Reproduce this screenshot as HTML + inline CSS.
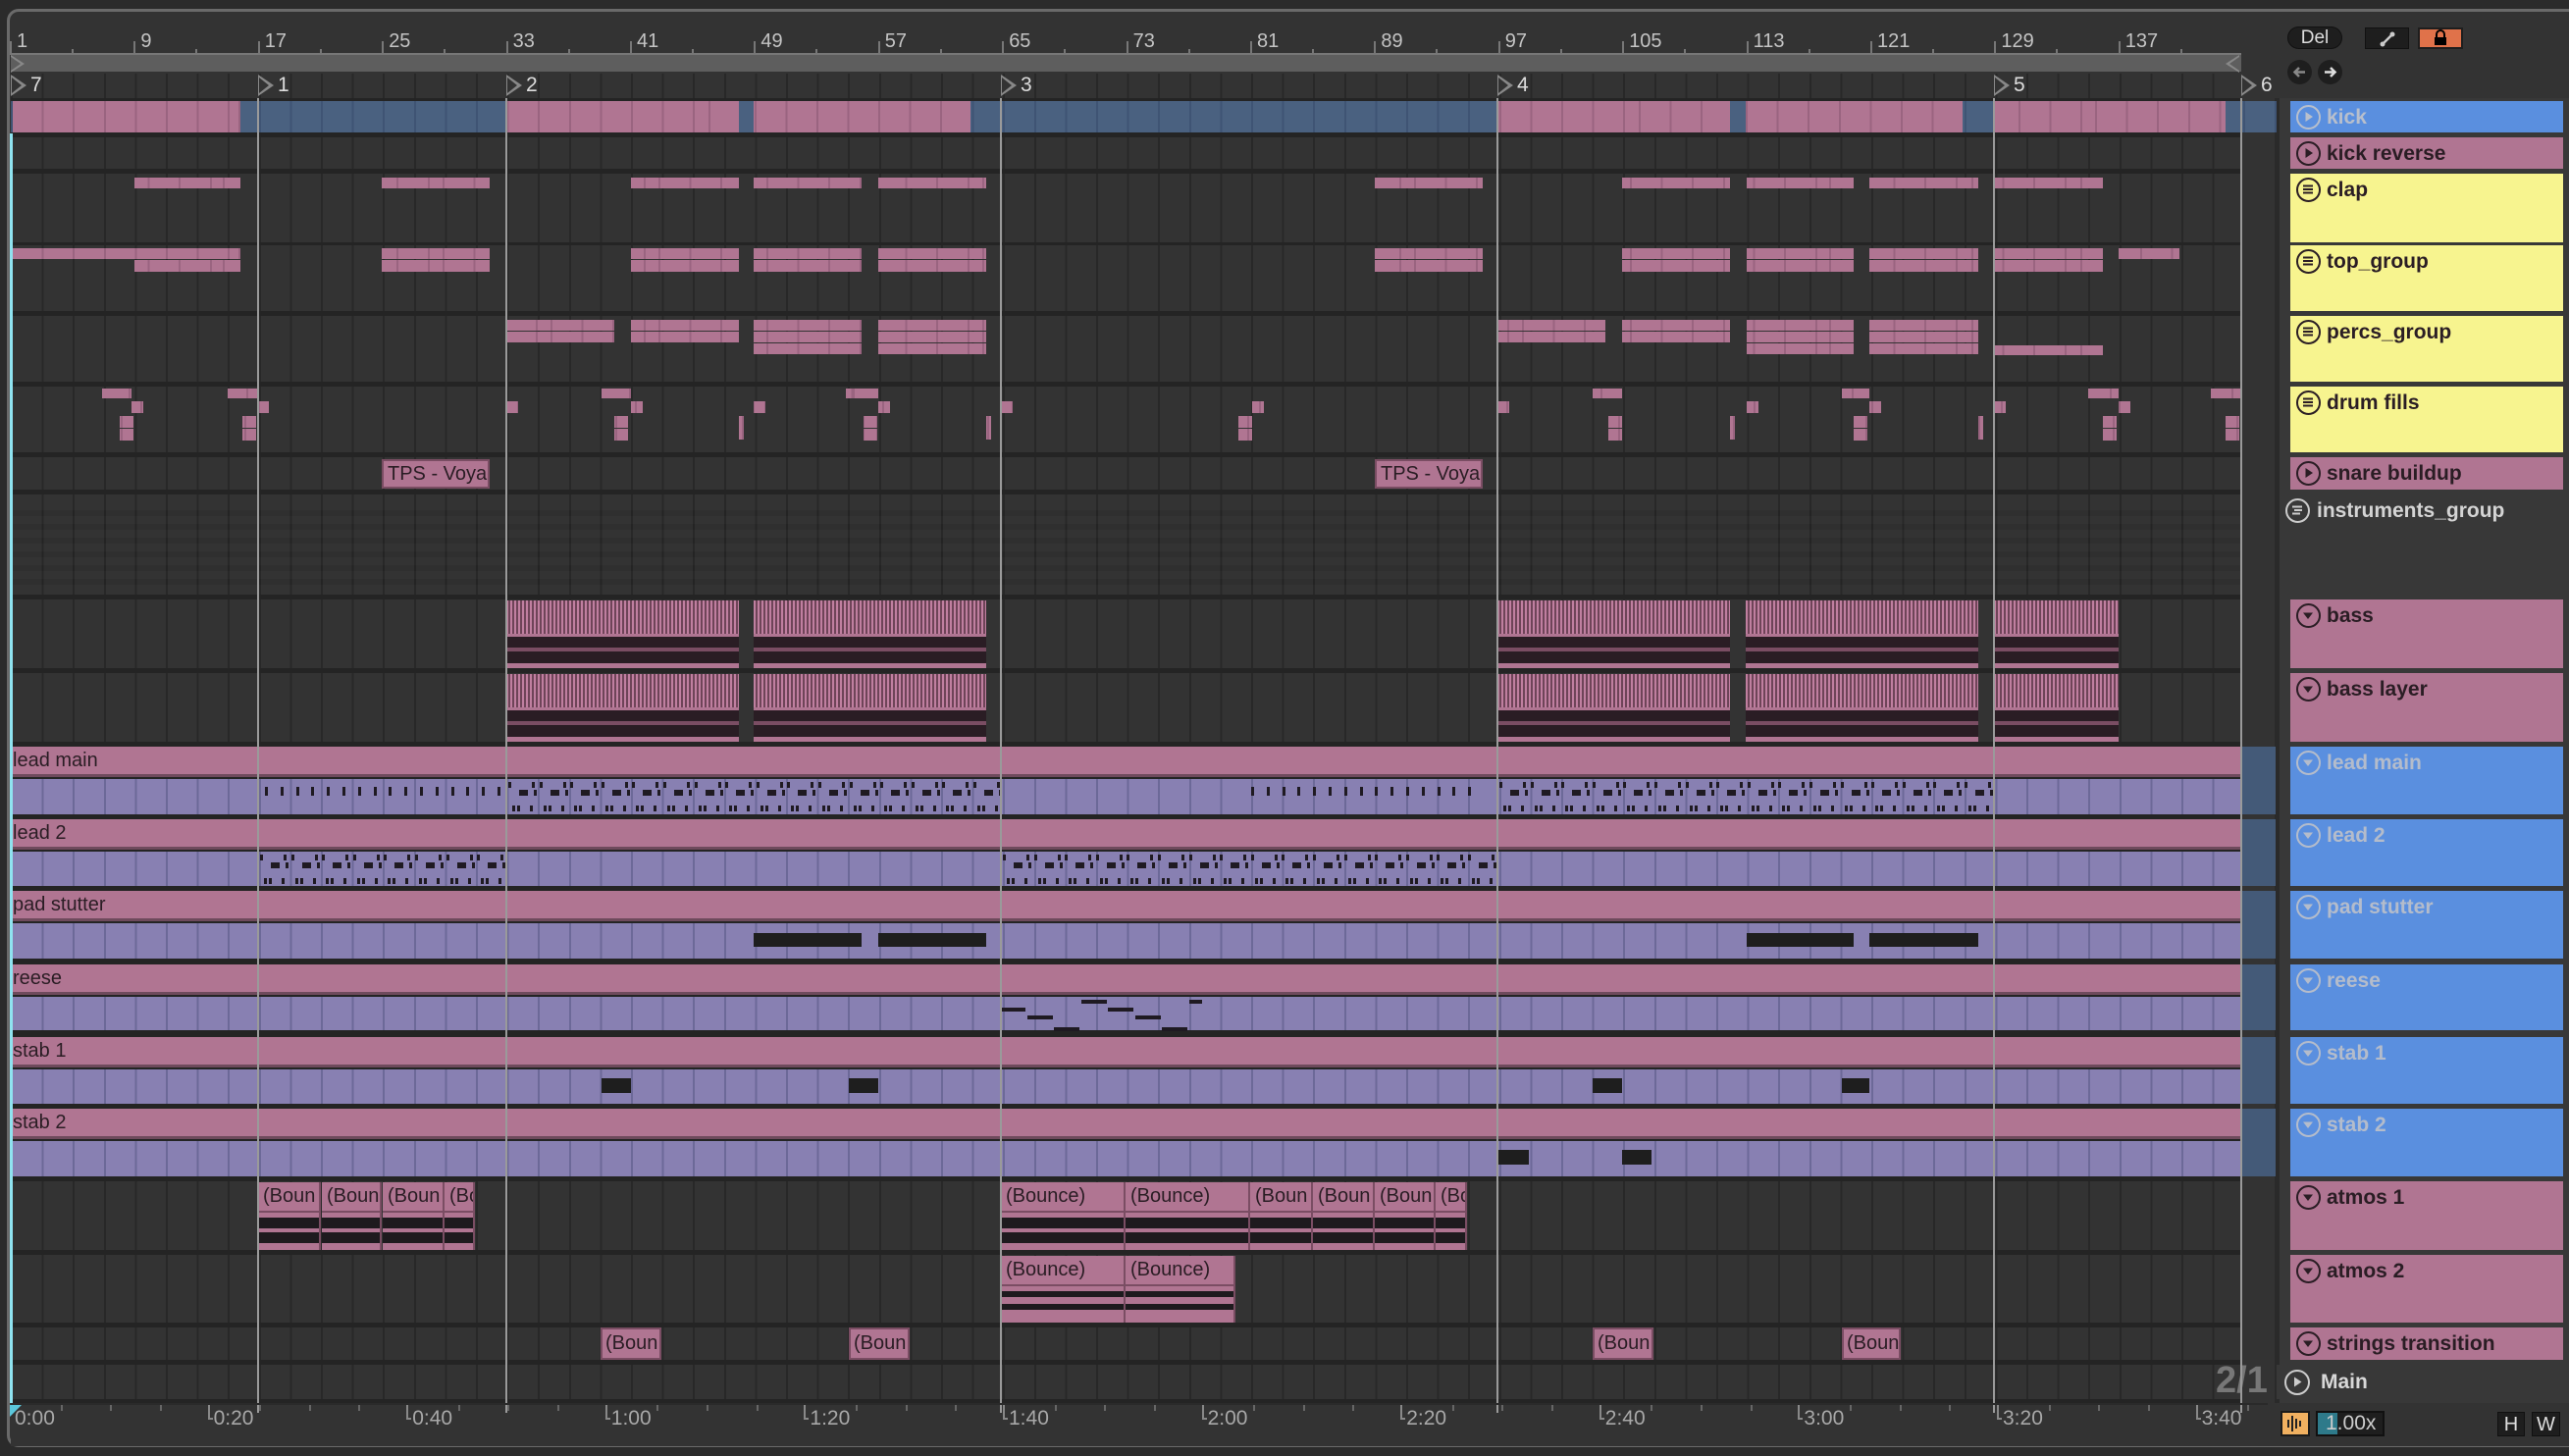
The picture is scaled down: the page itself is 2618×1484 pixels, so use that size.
<!DOCTYPE html>
<html><head><meta charset="utf-8">
<style>
*{margin:0;padding:0;box-sizing:border-box}
body{width:2618px;height:1484px;background:#2b2b2b;overflow:hidden;position:relative;font-family:"Liberation Sans",sans-serif}
.a{position:absolute}
</style></head><body>
<div class="a" style="left:7px;top:9px;width:2611px;height:1466px;background:#333;border-left:3px solid #6a6a6a;border-top:3px solid #6a6a6a;border-bottom:3px solid #6a6a6a;border-radius:12px 0 0 12px"></div>
<div class="a" style="left:2320px;top:100px;width:298px;height:1330px;background:#383838"></div>
<div class="a" style="left:2318px;top:100px;width:5px;height:1330px;background:#2a2a2a"></div>
<div id="root"></div>
<script>
var R=document.getElementById('root');
function r(x,y,w,h,s,t){var d=document.createElement('div');d.className='a';d.style.cssText='left:'+x+'px;top:'+y+'px;width:'+w+'px;height:'+h+'px;'+(s||'');if(t)d.innerHTML=t;R.appendChild(d);return d;}
var X0=11,XE=2284,B=15.8;
function bx(n){return X0+(n-1)*B;}
var grid='background-image:repeating-linear-gradient(90deg,#282828 0 2px,transparent 2px 31.6px);';
var pgrid='background-image:repeating-linear-gradient(90deg,#6c6998 0 2px,transparent 2px 31.6px);';
r(X0,100,XE-X0,1330,'background:#242424');
r(X0,54,XE-X0,2,'background:#777');
for(var n=1;n<=137;n+=8){var x=bx(n);r(x-1,42,2,14,'background:#777');r(x+6,31,60,24,'color:#c4c4c4;font-size:20px',String(n));r(x+62,50,2,5,'background:#777');}
r(X0,56,XE-X0,17,'background:#5e5e5e');
r(X0,75,XE-X0,25,'background:#333;'+grid);
r(X0,56,0,0,'border-left:14px solid #888;border-top:9px solid transparent;border-bottom:9px solid transparent');
r(X0,58,0,0,'border-left:10px solid #5e5e5e;border-top:7px solid transparent;border-bottom:7px solid transparent');
r(XE-16,56,0,0,'border-right:14px solid #888;border-top:9px solid transparent;border-bottom:9px solid transparent');
r(XE-12,58,0,0,'border-right:10px solid #5e5e5e;border-top:7px solid transparent;border-bottom:7px solid transparent');
var locs=[[11,'7'],[263,'1'],[516,'2'],[1020,'3'],[1526,'4'],[2032,'5'],[2284,'6']];
locs.forEach(function(l){r(l[0],76,0,0,'border-left:16px solid #888;border-top:11px solid transparent;border-bottom:11px solid transparent');r(l[0]+1,79,0,0,'border-left:10px solid #333;border-top:8px solid transparent;border-bottom:8px solid transparent');r(l[0]+20,75,30,26,'color:#ddd;font-size:21px',l[1]);});
var rows=[[103,135,'kick'],[140,172],[177,247],[250,317],[322,389],[394,461],[466,499],[504,606,'grp'],[611,681],[686,756],[761,830,'m','lead main'],[835,903,'m','lead 2'],[908,977,'m','pad stutter'],[983,1050,'m','reese'],[1057,1125,'m','stab 1'],[1130,1199,'m','stab 2'],[1204,1274],[1279,1348],[1353,1386],[1391,1426]];
rows.forEach(function(w){var t=w[0],h=w[1]-w[0];
 if(w[2]=='kick'){r(X0,t,2320-X0,h,'background:#4a6180;background-image:repeating-linear-gradient(90deg,#3f5474 0 2px,transparent 2px 31.6px)');}
 else if(w[2]=='m'){r(X0,t,XE-X0,31,'background:#b07592;border-bottom:3px solid #6e4a5c;color:#2a1d24;font-size:20px;padding:3px 0 0 2px',w[3]);r(X0,t+33,XE-X0,h-33,'background:#8880b2;'+pgrid);r(XE+1,t,34,h,'background:#445a78');}
 else {r(X0,t,XE-X0,h,'background:#333;'+grid);}
});
for(var i=0;i<6;i++)r(X0,520+i*14,XE-X0,6,'background:rgba(0,0,0,0.08)');
r(X0,1430,2320-X0,44,'background:#333');
function pk(x1,x2,y,h,s){r(x1,y,x2-x1,h,'background:#b07592;background-image:repeating-linear-gradient(90deg,#9a6480 0 2px,transparent 2px 31.6px);background-position:'+(X0-x1)+'px 0;'+(s||''));}
[[13,245],[516,753],[768,989],[1526,1763],[1779,2000],[2032,2268]].forEach(function(c){pk(c[0],c[1],103,32);});
var cl=[[137,245],[389,499],[643,753],[768,878],[895,1005],[1401,1511],[1653,1763],[1780,1889],[1905,2016],[2032,2143]];
cl.forEach(function(c){pk(c[0],c[1],181,11);});
pk(13,245,253,11);pk(137,245,265,12);
[[389,499],[643,753],[768,878],[895,1005],[1401,1511],[1653,1763],[1780,1889],[1905,2016],[2032,2143]].forEach(function(c){pk(c[0],c[1],253,11);pk(c[0],c[1],265,12);});
pk(2159,2221,253,11);
[[516,626],[643,753],[1526,1636],[1653,1763]].forEach(function(c){pk(c[0],c[1],326,11);pk(c[0],c[1],338,11);});
[[768,878],[895,1005],[1780,1889],[1905,2016]].forEach(function(c){pk(c[0],c[1],326,11);pk(c[0],c[1],338,11);pk(c[0],c[1],350,11);});
pk(2032,2143,352,10);
[[104,134],[232,262],[613,643],[862,895],[1623,1653],[1877,1905],[2128,2159],[2253,2284]].forEach(function(c){pk(c[0],c[1],396,10);});
[134,262,516,643,768,895,1020,1276,1526,1780,1905,2032,2159].forEach(function(x){pk(x,x+12,409,12);});
[122,247,626,880,1262,1639,1889,2143,2268].forEach(function(x){pk(x,x+14,424,12);pk(x,x+14,437,12);});
[753,1005,1763,2016].forEach(function(x){pk(x,x+5,424,24);});
[[389,499],[1401,1511]].forEach(function(c){r(c[0],468,c[1]-c[0],30,'background:#b07592;border:2px solid #7a4d63;color:#2a1d24;font-size:20px;padding:2px 0 0 4px;overflow:hidden;white-space:nowrap','TPS - Voyage');});
[[516,753],[768,1005],[1526,1763],[1779,2016],[2032,2159]].forEach(function(c){[611,686].forEach(function(t){
 r(c[0],t+1,c[1]-c[0],34,'background:repeating-linear-gradient(90deg,#c07fa0 0 2px,#6e4458 2px 4px)');
 r(c[0],t+35,c[1]-c[0],35,'background:#b07592;background-image:linear-gradient(180deg,transparent 0 3px,#2a1d24 3px 14px,#7a4d63 14px 18px,#2a1d24 18px 30px,transparent 30px),repeating-linear-gradient(90deg,transparent 0 3px,rgba(176,117,146,0.6) 3px 4px)');});});
var dk='background:#1f1a22';
function dense(t,x1,x2){for(var x=x1;x<x2-4;x+=31.6){r(x+2,t+3,3,6,dk);r(x+26,t+3,3,6,dk);r(x+13,t+11,3,6,dk);r(x+16,t+11,6,6,dk);r(x+28,t+11,3,6,dk);r(x+6,t+27,3,6,dk);r(x+11,t+27,3,6,dk);r(x+24,t+27,3,6,dk);}}
dense(794,516,1005);dense(794,1526,2016);
for(var x=270;x<510;x+=15.8)r(x,802,3,9,dk);
for(var x=1275;x<1510;x+=15.8)r(x,802,3,9,dk);
dense(868,263,499);dense(868,1020,1511);
[[768,878],[895,1005],[1780,1889],[1905,2016]].forEach(function(c){r(c[0],951,c[1]-c[0],14,'background:#1e1e1e');});
[[1020,1045,1027],[1047,1073,1035],[1074,1100,1047],[1102,1128,1019],[1129,1155,1027],[1157,1183,1035],[1184,1210,1047],[1212,1225,1019]].forEach(function(c){r(c[0],c[2],c[1]-c[0],4,dk);});
[[613,643],[865,895],[1623,1653],[1877,1905]].forEach(function(c){r(c[0],1099,c[1]-c[0],15,'background:#1e1e1e');});
[[1526,1558],[1653,1683]].forEach(function(c){r(c[0],1172,c[1]-c[0],15,'background:#1e1e1e');});
function au(x1,x2,t,h,name,flat){r(x1,t,x2-x1,31,'background:#b07592;border-right:2px solid #7a4d63;border-bottom:2px solid #7a4d63;color:#2a1d24;font-size:20px;padding:3px 0 0 5px;overflow:hidden;white-space:nowrap',name);
 var wv=flat?'background:#b07592;background-image:repeating-linear-gradient(180deg,transparent 0 5px,#1e1a1e 5px 11px,transparent 11px 18px,#1e1a1e 18px 24px,transparent 24px 40px)':'background:#b07592;background-image:linear-gradient(180deg,transparent 0 5px,#1e1a1e 5px 16px,transparent 16px 20px,#1e1a1e 20px 31px,transparent 31px)';
 r(x1,t+31,x2-x1,h-31,wv+';border-right:2px solid #7a4d63');}
[[263,327],[328,389],[390,453],[453,484]].forEach(function(c,i){au(c[0],c[1],1205,69,i==3?'(Bo':'(Boun');});
[[1020,1147,'(Bounce)'],[1147,1274,'(Bounce)'],[1274,1338,'(Boun'],[1338,1401,'(Boun'],[1401,1463,'(Boun'],[1463,1495,'(Bo']].forEach(function(c){au(c[0],c[1],1205,69,c[2]);});
[[1020,1147],[1147,1259]].forEach(function(c){au(c[0],c[1],1280,68,'(Bounce)',1);});
[[612,674],[865,927],[1623,1685],[1877,1937]].forEach(function(c){r(c[0],1353,c[1]-c[0],33,'background:#b07592;border:2px solid #7a4d63;color:#2a1d24;font-size:20px;padding:3px 0 0 3px;overflow:hidden;white-space:nowrap','(Boun');});
r(2258,1386,60,40,'color:#777;font-size:38px;font-weight:bold','2/1');
[263,516,1020,1526,2032,2284].forEach(function(x){r(x-1,100,2,1340,'background:#9a9a9a');});
r(10,136,3,1294,'background:#8fe3f0');
r(10,1432,0,0,'border-left:12px solid #5bc8dc;border-bottom:12px solid transparent');
r(X0,1430,2300,2,'background:#2a2a2a');
var tl=['0:00','0:20','0:40','1:00','1:20','1:40','2:00','2:20','2:40','3:00','3:20','3:40'];
tl.forEach(function(s,i){var x=11+i*202.6;if(i>0){r(x-2,1432,2,14,'background:#888');r(x-2,1445,5,2,'background:#888');}r(x+4,1432,70,28,'color:#a8a8a8;font-size:21px;line-height:28px',s);
 for(var k=1;k<4;k++)r(x+k*50.6,1432,2,6,'background:#666');});
r(2331,27,56,23,'background:#1e1e1e;border:1px solid #111;border-radius:12px;color:#ddd;font-size:19px;text-align:center;line-height:21px','Del');
r(2410,28,45,22,'background:#1e1e1e;border:1px solid #111','<svg width="45" height="22"><line x1="17" y1="16" x2="27" y2="6" stroke="#ccc" stroke-width="2.5"/><circle cx="17" cy="16" r="2.5" fill="#ccc"/><circle cx="27" cy="6" r="2.5" fill="#ccc"/></svg>');
r(2464,28,46,22,'background:#e0724a;border:2px solid #1e1e1e','<svg width="42" height="18"><path d="M17 8 V5 a4 4 0 0 1 8 0 V8" stroke="#000" stroke-width="2" fill="none"/><rect x="15" y="8" width="12" height="8" fill="#000"/></svg>');
r(2331,61,25,25,'background:#1e1e1e;border-radius:50%','<svg width="25" height="25"><path d="M18 12.5 H8 M12 8 L7.5 12.5 L12 17" stroke="#888" stroke-width="2.5" fill="none"/></svg>');
r(2362,61,25,25,'background:#1e1e1e;border-radius:50%','<svg width="25" height="25"><path d="M7 12.5 H17 M13 8 L17.5 12.5 L13 17" stroke="#ddd" stroke-width="2.5" fill="none"/></svg>');
var play='<svg width="20" height="20"><path d="M7.5 5 L15 10 L7.5 15Z" fill="currentColor"/></svg>';
var grp='<svg width="20" height="20"><path d="M5 6.5H15M5 10H15M5 13.5H15" stroke="currentColor" stroke-width="2"/></svg>';
var tri='<svg width="20" height="20"><path d="M5 7.5 H15 L10 14Z" fill="currentColor"/></svg>';
var H=[[103,135,'#5a8fdf','#b8bfcc','kick',play],[140,172,'#b07592',0,'kick reverse',play],[177,247,'#f7f48f',0,'clap',grp],[250,317,'#f7f48f',0,'top_group',grp],[322,389,'#f7f48f',0,'percs_group',grp],[394,461,'#f7f48f',0,'drum fills',grp],[466,499,'#b07592',0,'snare buildup',play],[611,681,'#b07592',0,'bass',tri],[686,756,'#b07592',0,'bass layer',tri],[761,830,'#5a8fdf','#b4bccb','lead main',tri],[835,903,'#5a8fdf','#b4bccb','lead 2',tri],[908,977,'#5a8fdf','#b4bccb','pad stutter',tri],[983,1050,'#5a8fdf','#b4bccb','reese',tri],[1057,1125,'#5a8fdf','#b4bccb','stab 1',tri],[1130,1199,'#5a8fdf','#b4bccb','stab 2',tri],[1204,1274,'#b07592',0,'atmos 1',tri],[1279,1348,'#b07592',0,'atmos 2',tri],[1353,1386,'#b07592',0,'strings transition',tri]];
H.forEach(function(h){r(2334,h[0],278,h[1]-h[0],'background:'+h[2]+';font-weight:bold;font-size:21px;color:'+(h[3]||'#2a1d24'),'<div style="position:absolute;left:6px;top:4px;width:25px;height:25px;border:2.5px solid currentColor;border-radius:50%">'+h[5]+'</div><div style="position:absolute;left:37px;top:4px;line-height:26px">'+h[4]+'</div>');});
r(2329,508,280,30,'color:#d4d4d4;font-weight:bold;font-size:21px','<div style="position:absolute;left:0;top:0;width:25px;height:25px;border:2.5px solid #ccc;border-radius:50%"><svg width="20" height="20"><path d="M5 6.5H15M7 10H15M5 13.5H13" stroke="#ccc" stroke-width="2"/></svg></div><div style="position:absolute;left:32px;top:0;line-height:26px">instruments_group</div>');
r(2320,1391,298,35,'background:#383838');
r(2328,1396,280,30,'color:#d8d8d8;font-weight:bold;font-size:21px','<div style="position:absolute;left:0;top:0;width:26px;height:26px;border:2.5px solid #ccc;border-radius:50%"><svg width="21" height="21"><path d="M8 5.5 L15.5 10.5 L8 15.5Z" fill="#ccc"/></svg></div><div style="position:absolute;left:37px;top:0;line-height:26px">Main</div>');
r(2320,1430,298,44,'background:#333');
r(2324,1438,30,26,'background:#f0b060;border:2px solid #1a1a1a','<svg width="26" height="22"><path d="M6 7V15M10 3V19M14 6V16M18 8V14" stroke="#222" stroke-width="2"/></svg>');
r(2360,1438,70,26,'background:#1e1e1e;border:2px solid #111;color:#ccc;font-size:21px;line-height:22px;padding-left:8px','<div style="position:absolute;left:0;top:0;width:20px;height:22px;background:#2e7a8a"></div><span style="position:relative">1.00x</span>');
r(2545,1439,28,25,'background:#1e1e1e;border:1px solid #111;color:#ddd;font-size:20px;text-align:center;line-height:24px','H');
r(2580,1439,29,25,'background:#1e1e1e;border:1px solid #111;color:#ddd;font-size:20px;text-align:center;line-height:24px','W');
</script>
</body></html>
